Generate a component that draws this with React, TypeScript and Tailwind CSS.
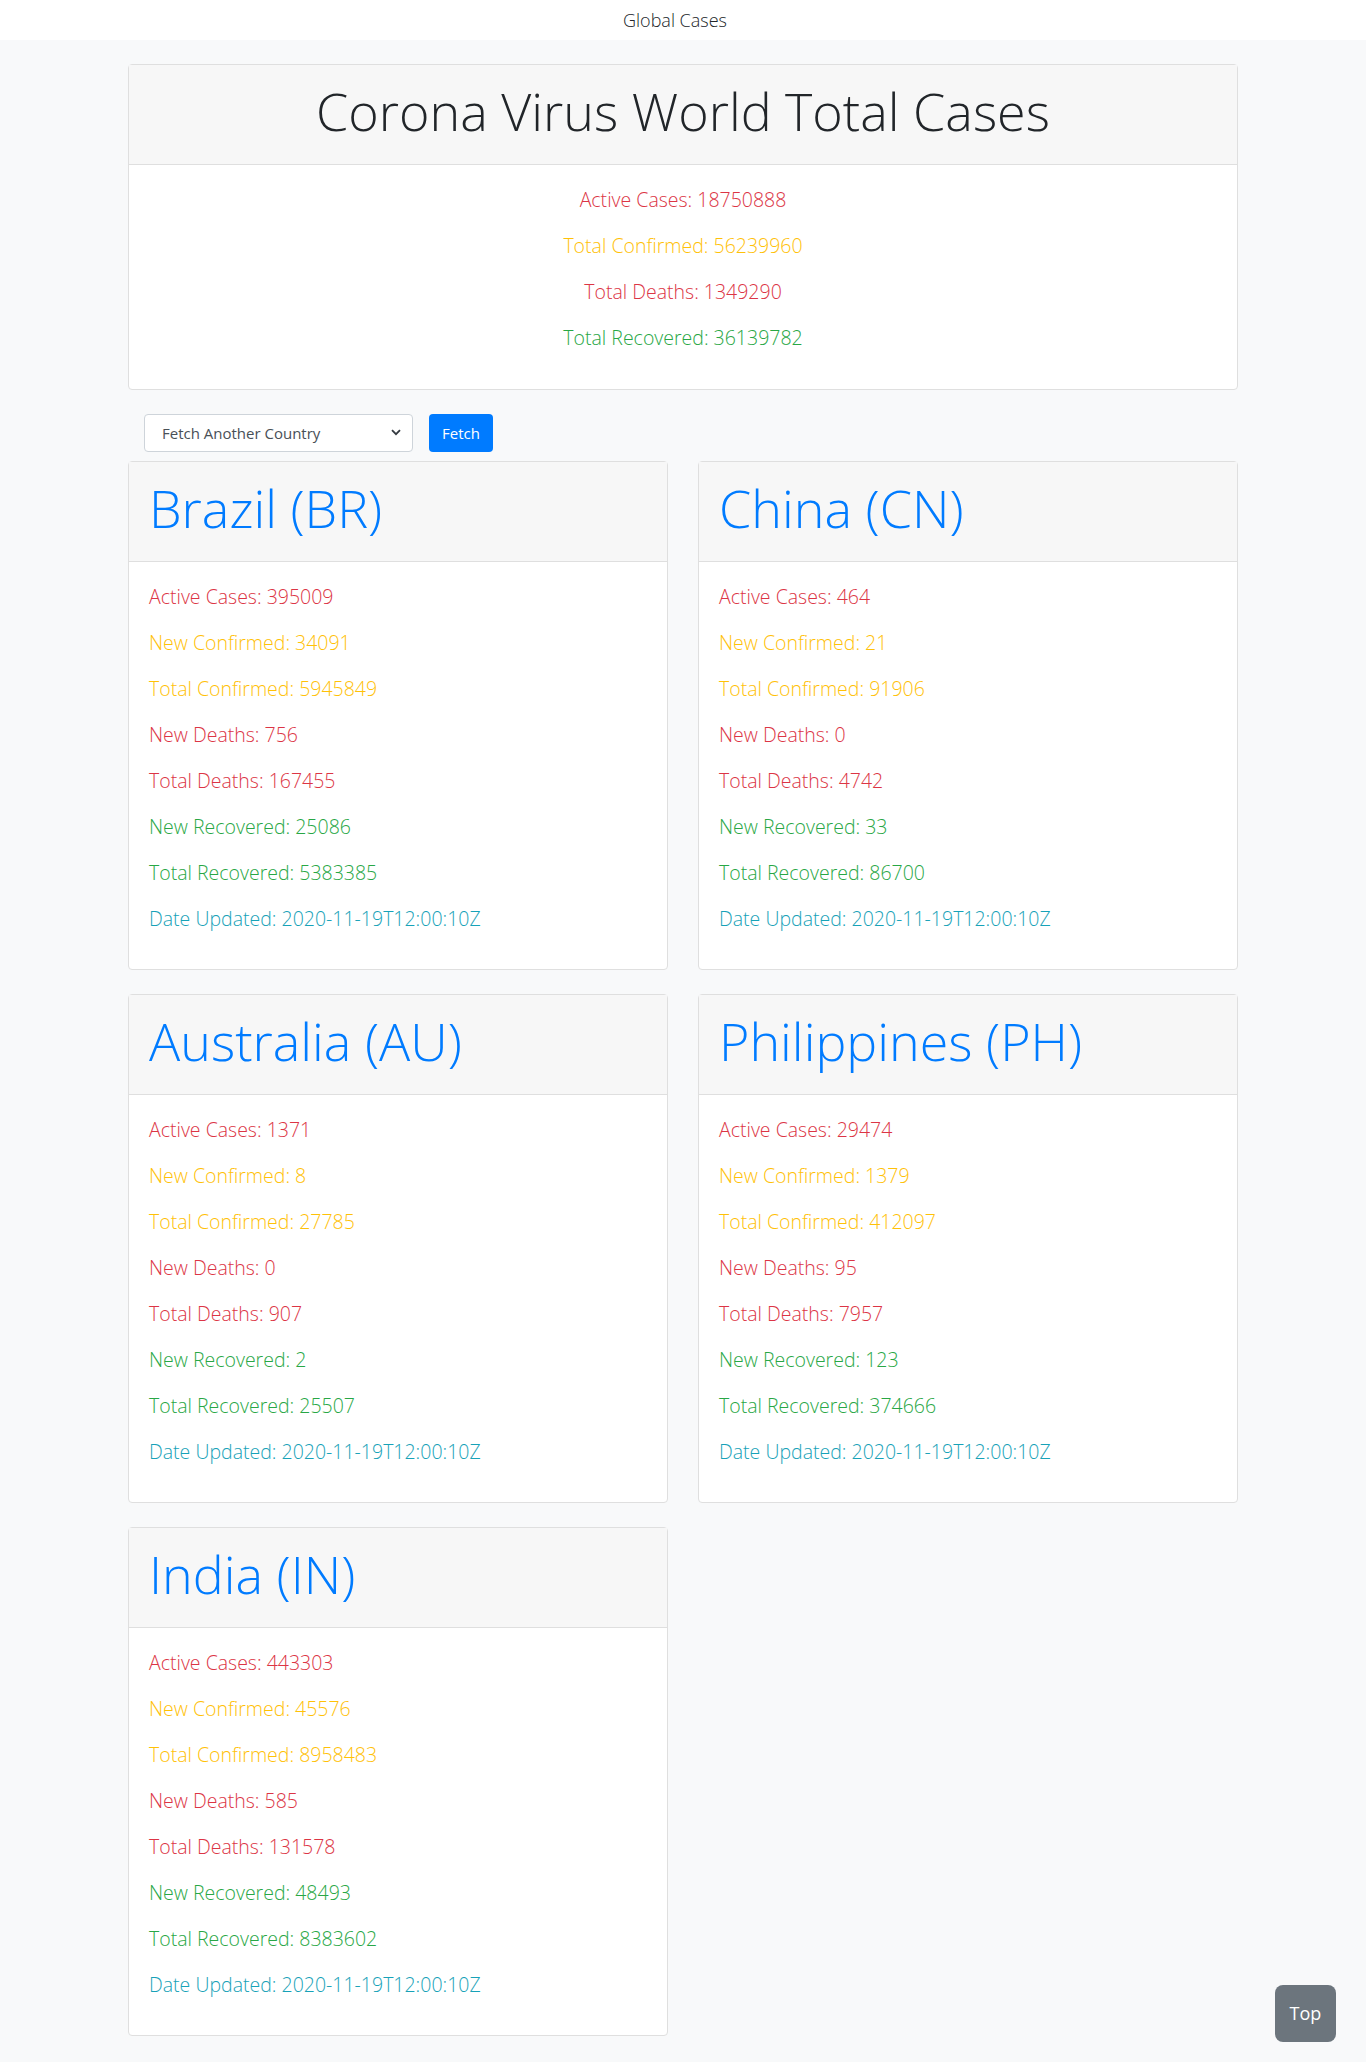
import React from 'react';

type Country = {
  name: string;
  code: string;
  active: number;
  newConfirmed: number;
  totalConfirmed: number;
  newDeaths: number;
  totalDeaths: number;
  newRecovered: number;
  totalRecovered: number;
  date: string;
};

const countries: Country[] = [
  { name: 'Brazil', code: 'BR', active: 395009, newConfirmed: 34091, totalConfirmed: 5945849, newDeaths: 756, totalDeaths: 167455, newRecovered: 25086, totalRecovered: 5383385, date: '2020-11-19T12:00:10Z' },
  { name: 'China', code: 'CN', active: 464, newConfirmed: 21, totalConfirmed: 91906, newDeaths: 0, totalDeaths: 4742, newRecovered: 33, totalRecovered: 86700, date: '2020-11-19T12:00:10Z' },
  { name: 'Australia', code: 'AU', active: 1371, newConfirmed: 8, totalConfirmed: 27785, newDeaths: 0, totalDeaths: 907, newRecovered: 2, totalRecovered: 25507, date: '2020-11-19T12:00:10Z' },
  { name: 'Philippines', code: 'PH', active: 29474, newConfirmed: 1379, totalConfirmed: 412097, newDeaths: 95, totalDeaths: 7957, newRecovered: 123, totalRecovered: 374666, date: '2020-11-19T12:00:10Z' },
  { name: 'India', code: 'IN', active: 443303, newConfirmed: 45576, totalConfirmed: 8958483, newDeaths: 585, totalDeaths: 131578, newRecovered: 48493, totalRecovered: 8383602, date: '2020-11-19T12:00:10Z' },
];

const CountryCard: React.FC<{ c: Country }> = ({ c }) => (
  <div className="rounded border border-[#dfdfdf] bg-white">
    <div className="border-b border-[#dfdfdf] bg-[#f7f7f7] px-5 pt-3 pb-5">
      <h1 className="text-[52px] font-light leading-[67px] text-[#007bff]">
        {c.name} ({c.code})
      </h1>
    </div>
    <div className="px-5 pt-5 pb-[19px] text-[19.5px] font-light leading-[30px]">
      <p className="mb-4 text-[#dc3545]">Active Cases: {c.active}</p>
      <p className="mb-4 text-[#ffc107]">New Confirmed: {c.newConfirmed}</p>
      <p className="mb-4 text-[#ffc107]">Total Confirmed: {c.totalConfirmed}</p>
      <p className="mb-4 text-[#dc3545]">New Deaths: {c.newDeaths}</p>
      <p className="mb-4 text-[#dc3545]">Total Deaths: {c.totalDeaths}</p>
      <p className="mb-4 text-[#28a745]">New Recovered: {c.newRecovered}</p>
      <p className="mb-4 text-[#28a745]">Total Recovered: {c.totalRecovered}</p>
      <p className="mb-4 text-[#17a2b8]">Date Updated: {c.date}</p>
    </div>
  </div>
);

export default function App() {
  return (
    <div className="min-h-screen bg-[#f8f9fa] font-['Open_Sans',sans-serif] text-[#212529]">
      {/* Navbar */}
      <nav className="flex h-10 items-center justify-center bg-white">
        <span className="mr-4 text-[18px] font-light">Global Cases</span>
      </nav>

      <div className="mx-auto w-[1140px] px-[15px] pt-6 pb-[25px]">
        {/* World totals */}
        <div className="rounded border border-[#dfdfdf] bg-white">
          <div className="border-b border-[#dfdfdf] bg-[#f7f7f7] px-5 pt-3 pb-5 text-center">
            <h1 className="text-[52px] font-light leading-[67px]">Corona Virus World Total Cases</h1>
          </div>
          <div className="px-5 pt-5 pb-5 text-center text-[19.5px] font-light leading-[30px]">
            <p className="mb-4 text-[#dc3545]">Active Cases: 18750888</p>
            <p className="mb-4 text-[#ffc107]">Total Confirmed: 56239960</p>
            <p className="mb-4 text-[#dc3545]">Total Deaths: 1349290</p>
            <p className="mb-4 text-[#28a745]">Total Recovered: 36139782</p>
          </div>
        </div>

        {/* Fetch form */}
        <div className="mt-6 flex gap-4 pl-4">
          <div className="relative h-[38px] w-[269px]">
            <select className="h-full w-full appearance-none rounded border border-[#ced4da] bg-white pl-[17px] pr-8 text-[15px] text-[#495057]">
              <option>Fetch Another Country</option>
            </select>
            <svg className="pointer-events-none absolute right-3 top-[15px]" width="10" height="7" viewBox="0 0 10 7">
              <path d="M1 1.2l4 4 4-4" fill="none" stroke="#343a40" strokeWidth="1.8" />
            </svg>
          </div>
          <button className="h-[38px] w-16 rounded bg-[#007bff] text-[15px] text-white">Fetch</button>
        </div>

        {/* Countries */}
        <div className="mt-[9px] grid grid-cols-2 gap-x-[30px] gap-y-6">
          {countries.map((c) => (
            <CountryCard key={c.code} c={c} />
          ))}
        </div>
      </div>

      <button className="fixed right-[30px] bottom-5 h-[57px] w-[61px] rounded-lg bg-[#6c757d] text-[18px] text-white">
        Top
      </button>
    </div>
  );
}
